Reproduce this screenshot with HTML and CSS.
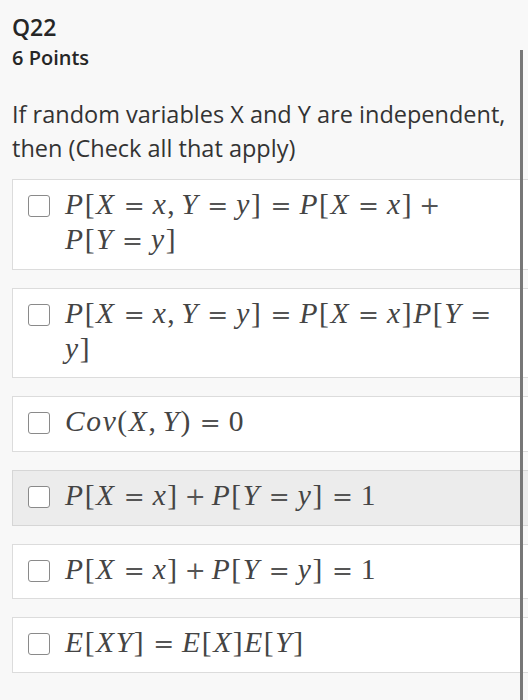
FILE: index.html
```html
<!DOCTYPE html>
<html>
<head>
<meta charset="utf-8">
<link rel="stylesheet" href="styles.css">
</head>
<body>
<div class="page">
  <div class="qnum">Q22</div>
  <div class="points">6 Points</div>
  <p class="question">If random variables X and Y are independent, then (Check all that apply)</p>

  <div class="options">
    <label class="opt">
      <span class="box"></span>
      <span class="math">
        <span class="line"><span class="mi">P</span>[<span class="mi">X</span><span class="rel">=</span><span class="mi">x</span><span class="p">,</span><span class="mi">Y</span><span class="rel">=</span><span class="mi">y</span>]<span class="rel">=</span><span class="mi">P</span>[<span class="mi">X</span><span class="rel">=</span><span class="mi">x</span>]<span class="bin">+</span></span>
        <span class="line"><span class="mi">P</span>[<span class="mi">Y</span><span class="rel">=</span><span class="mi">y</span>]</span>
      </span>
    </label>

    <label class="opt">
      <span class="box"></span>
      <span class="math">
        <span class="line"><span class="mi">P</span>[<span class="mi">X</span><span class="rel">=</span><span class="mi">x</span><span class="p">,</span><span class="mi">Y</span><span class="rel">=</span><span class="mi">y</span>]<span class="rel">=</span><span class="mi">P</span>[<span class="mi">X</span><span class="rel">=</span><span class="mi">x</span>]<span class="mi">P</span>[<span class="mi">Y</span><span class="rel">=</span></span>
        <span class="line"><span class="mi">y</span>]</span>
      </span>
    </label>

    <label class="opt">
      <span class="box"></span>
      <span class="math">
        <span class="line"><span class="mi">Cov</span>(<span class="mi">X</span><span class="p">,</span><span class="mi">Y</span>)<span class="rel">=</span>0</span>
      </span>
    </label>

    <label class="opt hover">
      <span class="box"></span>
      <span class="math">
        <span class="line"><span class="mi">P</span>[<span class="mi">X</span><span class="rel">=</span><span class="mi">x</span>]<span class="bin">+</span><span class="mi">P</span>[<span class="mi">Y</span><span class="rel">=</span><span class="mi">y</span>]<span class="rel">=</span>1</span>
      </span>
    </label>

    <label class="opt">
      <span class="box"></span>
      <span class="math">
        <span class="line"><span class="mi">P</span>[<span class="mi">X</span><span class="rel">=</span><span class="mi">x</span>]<span class="bin">+</span><span class="mi">P</span>[<span class="mi">Y</span><span class="rel">=</span><span class="mi">y</span>]<span class="rel">=</span>1</span>
      </span>
    </label>

    <label class="opt">
      <span class="box"></span>
      <span class="math">
        <span class="line"><span class="mi">E</span>[<span class="mi">XY</span>]<span class="rel">=</span><span class="mi">E</span>[<span class="mi">X</span>]<span class="mi">E</span>[<span class="mi">Y</span>]</span>
      </span>
    </label>
  </div>
  <div class="rail"></div>
</div>
</body>
</html>
```

FILE: styles.css
```css
html, body {
  margin: 0;
  padding: 0;
  background: #f8f8f8;
  overflow: hidden;
}
.page {
  position: relative;
  width: 528px;
  height: 700px;
  padding: 13px 0 0 12px;
  box-sizing: border-box;
  font-family: "Open Sans", "Noto Sans", sans-serif;
  color: #262626;
}
.qnum {
  font-size: 23px;
  font-weight: 600;
  line-height: 28px;
}
.points {
  margin-top: 4px;
  font-size: 20px;
  font-weight: 600;
  line-height: 26px;
}
.question {
  margin: 26px 0 14px 0;
  font-size: 23.5px;
  line-height: 34px;
  color: #333;
  width: 500px;
}
.options {
  display: flex;
  flex-direction: column;
  gap: 18.2px;
  width: 540px;
}
.opt {
  display: flex;
  align-items: flex-start;
  gap: 15px;
  background: #fff;
  border: 1px solid #dcdcdc;
  padding: 7px 0 11.5px 15px;
}
.opt.hover {
  background: #ececec;
  border-color: #d6d6d6;
}
.box {
  flex: none;
  width: 22px;
  height: 22px;
  margin-top: 8px;
  box-sizing: border-box;
  border: 1.5px solid #8a8a8a;
  border-radius: 3px;
  background: #fff;
}
.math {
  display: flex;
  flex-direction: column;
  font-family: "Liberation Serif", "DejaVu Serif", serif;
  font-size: 29.5px;
  line-height: 35px;
  letter-spacing: 1.6px;
  color: #444;
}
.line {
  white-space: nowrap;
  height: 35px;
}
.mi {
  font-style: italic;
}
.rel, .bin {
  font-family: "DejaVu Serif", "Liberation Serif", serif;
  font-size: 25px;
  line-height: 0;
  letter-spacing: 0;
  color: #555;
}
.rel {
  margin: 0 8px;
}
.bin {
  margin: 0 6px;
}
.p {
  margin-right: 5px;
}
.rail {
  position: absolute;
  left: 520px;
  top: 50px;
  width: 3px;
  height: 650px;
  background: #777;
}
```
